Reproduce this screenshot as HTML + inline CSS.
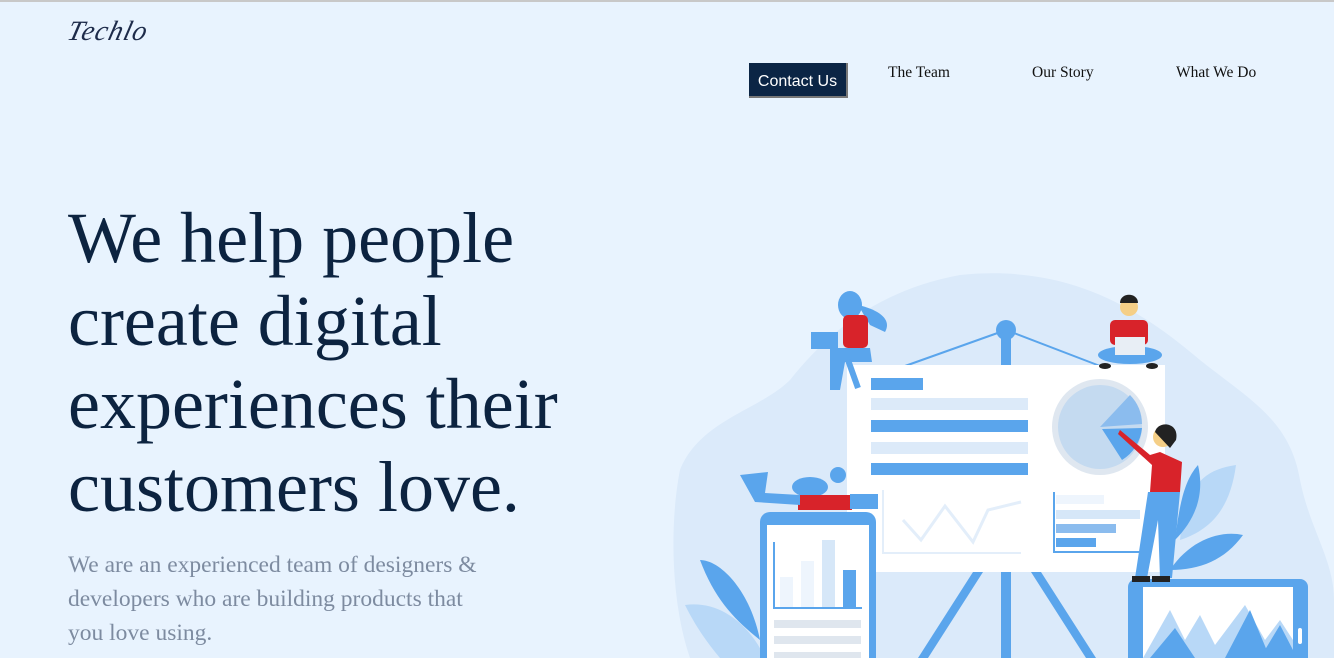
<!DOCTYPE html>
<html><head><meta charset="utf-8"><style>
html,body{margin:0;padding:0}
body{width:1334px;height:658px;overflow:hidden;background:#e8f3fe;position:relative;font-family:"Liberation Serif",serif}
.top{position:absolute;left:0;top:0;width:1334px;height:2px;background:#c8c8c8}
.logo{position:absolute;left:68px;top:16px;font-size:28px;font-style:italic;color:#1d2b4a;letter-spacing:1px;font-family:"Liberation Serif",serif;transform:skewX(-14deg)}
.btn{position:absolute;left:749px;top:63px;width:99px;height:35px;background:#0b2545;color:#fff;font:16px "Liberation Sans",sans-serif;line-height:35px;text-align:center;border-right:2px solid #777;border-bottom:2px solid #777;box-sizing:border-box;padding-top:1px}
.nav{position:absolute;top:64px;font-size:15.5px;color:#111}
h1{position:absolute;left:68px;top:197px;margin:0;font-weight:normal;font-size:72px;line-height:83px;color:#0c2340}
p{position:absolute;left:68px;top:548px;margin:0;font-size:23.5px;line-height:34px;color:#7d8ba0;width:425px}
svg{position:absolute;left:0;top:0}
</style></head><body>
<div class="top"></div>
<div class="logo">Techlo</div>
<div class="btn">Contact Us</div>
<div class="nav" style="left:888px">The Team</div>
<div class="nav" style="left:1032px">Our Story</div>
<div class="nav" style="left:1176px">What We Do</div>
<h1>We help people<br>create digital<br>experiences their<br>customers love.</h1>
<p>We are an experienced team of designers &amp; developers who are building products that you love using.</p>
<svg width="1334" height="658" viewBox="0 0 1334 658">
<path d="M680 470 C700 420 760 410 790 380 C830 330 880 290 960 275 C1060 265 1130 300 1200 360 C1250 400 1290 420 1300 480 C1310 530 1334 560 1334 600 L1334 658 L690 658 C670 600 670 520 680 470Z" fill="#dbeafa"/>
<g fill="#5aa5ec">
<polygon points="973,572 983,572 928,658 918,658"/>
<polygon points="1031,572 1041,572 1096,658 1086,658"/>
<rect x="1001" y="330" width="10" height="328"/>
<circle cx="1006" cy="330" r="10"/>
</g>
<path d="M905 366 L1006 330 L1100 366" stroke="#5aa5ec" stroke-width="2" fill="none"/>
<rect x="847" y="365" width="318" height="207" fill="#fff"/>
<rect x="871" y="378" width="52" height="12" fill="#5aa5ec"/>
<rect x="871" y="398" width="157" height="12" fill="#dceaf9"/>
<rect x="871" y="420" width="157" height="12" fill="#5aa5ec"/>
<rect x="871" y="442" width="157" height="12" fill="#dceaf9"/>
<rect x="871" y="463" width="157" height="12" fill="#5aa5ec"/>
<circle cx="1100" cy="427" r="48" fill="#dfe7f0"/>
<circle cx="1100" cy="427" r="42" fill="#c4daf0"/>
<path d="M1100 427 L1130 395 A42 42 0 0 1 1142 424Z" fill="#8bbcee"/>
<path d="M1102 429 L1142 428 A42 42 0 0 1 1122 460Z" fill="#5aa5ec"/>
<path d="M883 490 V553 H1021" stroke="#e3eefa" stroke-width="2" fill="none"/>
<polyline points="903,520 921,540 945,506 973,542 988,510 1021,502" stroke="#e3eefa" stroke-width="3" fill="none"/>
<path d="M1054 492 V552 H1140" stroke="#5aa5ec" stroke-width="2" fill="none"/>
<rect x="1056" y="495" width="48" height="9" fill="#eef5fd"/>
<rect x="1056" y="510" width="84" height="9" fill="#d6e7f8"/>
<rect x="1056" y="524" width="60" height="9" fill="#8bbcee"/>
<rect x="1056" y="538" width="40" height="9" fill="#5aa5ec"/>
<path d="M1180 540 C1185 490 1200 470 1236 465 C1230 510 1210 530 1180 540Z" fill="#b8d8f7"/>
<path d="M1175 540 C1180 500 1185 480 1198 465 C1205 495 1195 520 1175 540Z" fill="#5aa5ec"/>
<path d="M1170 570 C1190 540 1220 530 1243 535 C1225 560 1200 570 1170 570Z" fill="#5aa5ec"/>
<path d="M700 560 C720 560 750 590 760 640 C735 620 715 600 700 560Z" fill="#5aa5ec"/>
<path d="M685 605 C720 600 750 625 765 658 L720 658 C705 640 695 625 685 605Z" fill="#b8d8f7"/>
<rect x="760" y="512" width="116" height="160" rx="10" fill="#5aa5ec"/>
<rect x="767" y="525" width="102" height="140" fill="#fff"/>
<rect x="780" y="577" width="13" height="30" fill="#eef5fd"/>
<rect x="801" y="561" width="13" height="46" fill="#eef5fd"/>
<rect x="822" y="540" width="13" height="67" fill="#d6e7f8"/>
<rect x="843" y="570" width="13" height="37" fill="#5aa5ec"/>
<path d="M774 542 V608 H862" stroke="#5aa5ec" stroke-width="2" fill="none"/>
<rect x="774" y="620" width="87" height="8" fill="#dfe6ee"/>
<rect x="774" y="636" width="87" height="8" fill="#dfe6ee"/>
<rect x="774" y="652" width="87" height="8" fill="#dfe6ee"/>
<rect x="1128" y="579" width="180" height="90" rx="8" fill="#5aa5ec"/>
<rect x="1143" y="587" width="150" height="80" fill="#fff"/>
<path d="M1143 658 L1170 610 L1185 640 L1200 615 L1215 645 L1245 605 L1265 640 L1280 620 L1293 640 L1293 658Z" fill="#b8d8f7"/>
<path d="M1150 658 L1175 628 L1195 658Z M1225 658 L1250 610 L1270 658Z M1260 658 L1280 625 L1293 650 L1293 658Z" fill="#5aa5ec"/>
<rect x="1298" y="628" width="4" height="16" rx="2" fill="#fff"/>
<ellipse cx="850" cy="305" rx="12" ry="14" fill="#5aa5ec"/>
<path d="M858 305 C880 310 892 320 885 332 L870 325Z" fill="#5aa5ec"/>
<rect x="843" y="315" width="25" height="33" rx="5" fill="#d8232a"/>
<path d="M830 348 L870 348 L872 362 L845 362 L840 390 L830 390Z" fill="#5aa5ec"/>
<path d="M848 360 L858 388" stroke="#5aa5ec" stroke-width="6"/>
<rect x="811" y="332" width="27" height="17" fill="#5aa5ec"/>
<circle cx="1129" cy="307" r="9" fill="#f5cf87"/>
<path d="M1120 303 C1120 292 1138 292 1138 303Z" fill="#222"/>
<rect x="1110" y="320" width="38" height="25" rx="5" fill="#d8232a"/>
<ellipse cx="1130" cy="355" rx="32" ry="9" fill="#5aa5ec"/>
<rect x="1115" y="337" width="30" height="18" fill="#e8eef5"/>
<ellipse cx="1105" cy="366" rx="6" ry="3" fill="#222"/>
<ellipse cx="1152" cy="366" rx="6" ry="3" fill="#222"/>
<circle cx="1163" cy="437" r="10" fill="#f5cf87"/>
<path d="M1155 432 C1158 420 1180 422 1176 440 L1170 448 Z" fill="#222"/>
<path d="M1120 430 L1150 455 L1160 452 L1182 462 L1180 492 L1150 492 L1152 465 L1118 434Z" fill="#d8232a"/>
<path d="M1148 492 L1180 492 L1172 578 L1160 578 L1158 520 L1147 578 L1135 578Z" fill="#5aa5ec"/>
<rect x="1132" y="576" width="18" height="6" fill="#222"/>
<rect x="1152" y="576" width="18" height="6" fill="#222"/>
<ellipse cx="810" cy="487" rx="18" ry="10" fill="#5aa5ec"/>
<circle cx="838" cy="475" r="8" fill="#5aa5ec"/>
<path d="M798 495 L850 495 L852 510 L798 510Z" fill="#d8232a"/>
<path d="M740 475 L755 502 L800 505 L800 495 L765 493 L768 472Z" fill="#5aa5ec"/>
<rect x="850" y="494" width="28" height="15" fill="#5aa5ec"/>
</svg>
</body></html>
